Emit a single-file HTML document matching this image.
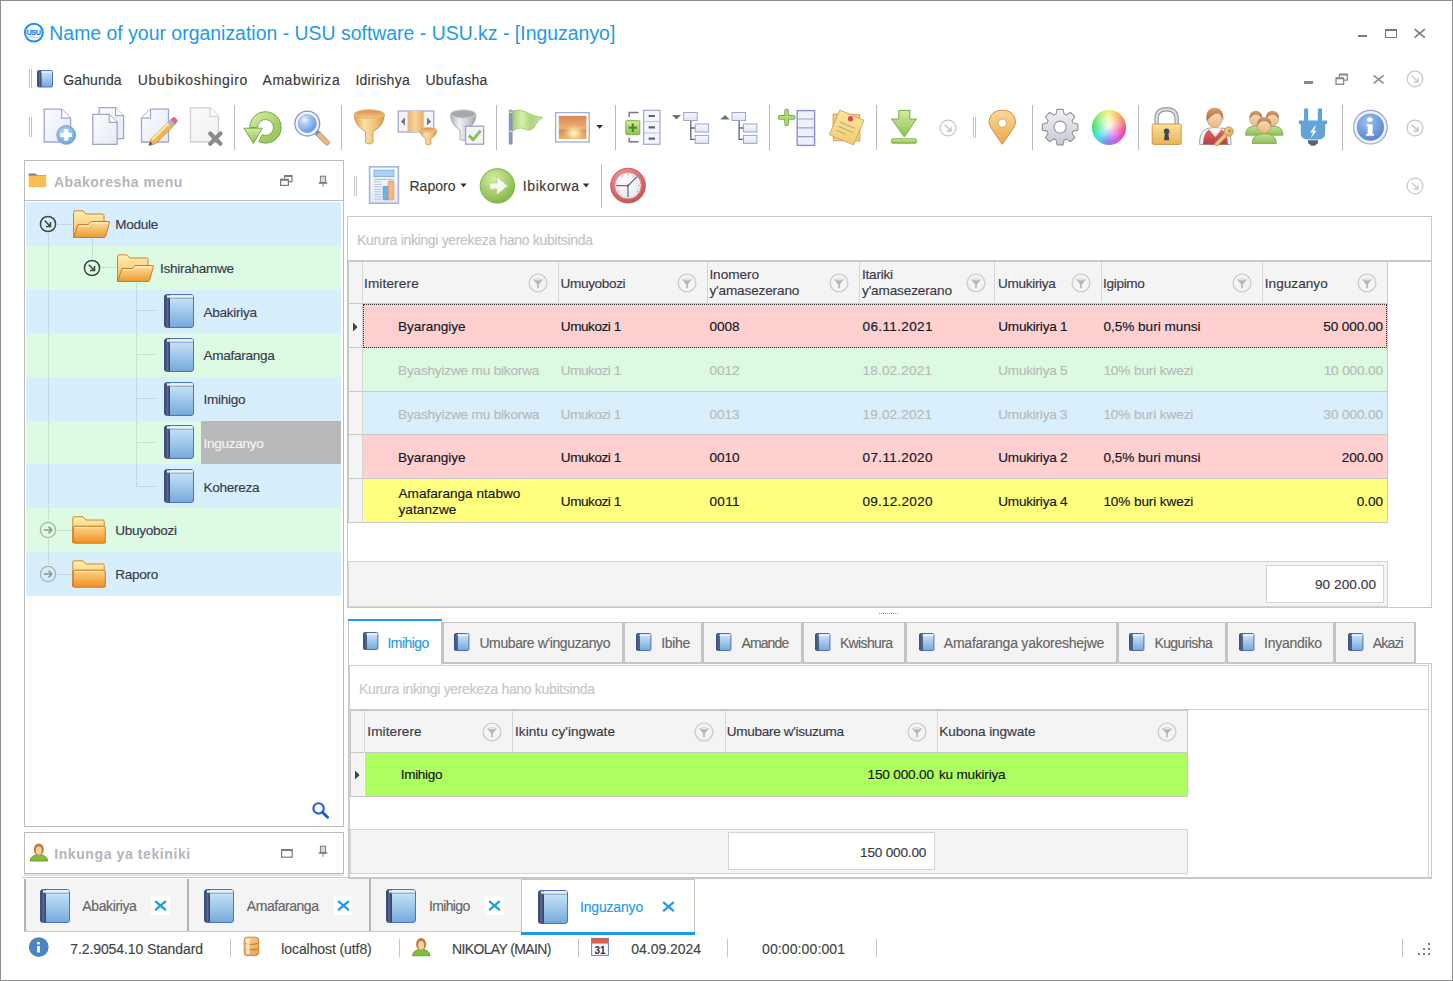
<!DOCTYPE html>
<html><head><meta charset="utf-8"><style>
html,body{margin:0;padding:0;}
body{width:1453px;height:981px;position:relative;overflow:hidden;background:#fff;font-family:"Liberation Sans", sans-serif;}
.a{position:absolute;}
.t{white-space:pre;-webkit-text-stroke:0.15px currentColor;}
svg{overflow:visible;}
</style></head><body>
<svg width="0" height="0" style="position:absolute"><defs>
<linearGradient id="gBookCover" x1="0" y1="0" x2="0" y2="1"><stop offset="0" stop-color="#cfe9f9"/><stop offset="1" stop-color="#74a9dc"/></linearGradient>
<linearGradient id="gBookSpine" x1="0" y1="0" x2="1" y2="0"><stop offset="0" stop-color="#2c3657"/><stop offset="0.5" stop-color="#5d6c95"/><stop offset="1" stop-color="#2f3b60"/></linearGradient>
<linearGradient id="gFoldBack" x1="0" y1="0" x2="0" y2="1"><stop offset="0" stop-color="#ffefb0"/><stop offset="1" stop-color="#f3b758"/></linearGradient>
<linearGradient id="gFoldFront" x1="0" y1="0" x2="0" y2="1"><stop offset="0" stop-color="#fde0a0"/><stop offset="1" stop-color="#ec9a30"/></linearGradient>
<linearGradient id="gFoldFrontC" x1="0" y1="0" x2="0" y2="1"><stop offset="0" stop-color="#fdd48a"/><stop offset="1" stop-color="#f19020"/></linearGradient>
</defs></svg>
<svg width="0" height="0" style="position:absolute"><defs>
<linearGradient id="gPage" x1="0" y1="0" x2="1" y2="1"><stop offset="0" stop-color="#fbfcff"/><stop offset="1" stop-color="#e6eaf4"/></linearGradient>
<linearGradient id="gPageGray" x1="0" y1="0" x2="1" y2="1"><stop offset="0" stop-color="#fcfcfc"/><stop offset="1" stop-color="#efefef"/></linearGradient>
<radialGradient id="gPlus" cx="0.45" cy="0.4" r="0.6"><stop offset="0" stop-color="#c4e2f8"/><stop offset="1" stop-color="#66a2d8"/></radialGradient>
<linearGradient id="gGreen" x1="0" y1="0" x2="0" y2="1"><stop offset="0" stop-color="#d4eca0"/><stop offset="1" stop-color="#8cc052"/></linearGradient>
<linearGradient id="gGreen2" x1="0" y1="0" x2="1" y2="1"><stop offset="0" stop-color="#d8f0a8"/><stop offset="1" stop-color="#88bc50"/></linearGradient>
<radialGradient id="gLens" cx="0.35" cy="0.3" r="0.75"><stop offset="0" stop-color="#eef6ff"/><stop offset="0.35" stop-color="#a8ccf4"/><stop offset="1" stop-color="#5e96dc"/></radialGradient>
<linearGradient id="gGold" x1="0" y1="0" x2="1" y2="0"><stop offset="0" stop-color="#e0a050"/><stop offset="0.35" stop-color="#fde0a8"/><stop offset="0.7" stop-color="#f0c07a"/><stop offset="1" stop-color="#d89848"/></linearGradient>
<linearGradient id="gGoldIn" x1="0" y1="0" x2="0" y2="1"><stop offset="0" stop-color="#d8904a"/><stop offset="1" stop-color="#f4c888"/></linearGradient>
<linearGradient id="gSilver" x1="0" y1="0" x2="1" y2="0"><stop offset="0" stop-color="#a8acb4"/><stop offset="0.35" stop-color="#f0f2f6"/><stop offset="0.7" stop-color="#c8ccd4"/><stop offset="1" stop-color="#9a9ea8"/></linearGradient>
<linearGradient id="gColGold" x1="0" y1="0" x2="1" y2="0"><stop offset="0" stop-color="#eab46c"/><stop offset="0.5" stop-color="#f8d49a"/><stop offset="1" stop-color="#e8ac60"/></linearGradient>
<linearGradient id="gFlag" x1="0" y1="0" x2="1" y2="0"><stop offset="0" stop-color="#a4cc70"/><stop offset="0.3" stop-color="#d8f0b0"/><stop offset="0.6" stop-color="#b0d480"/><stop offset="1" stop-color="#c8e4a0"/></linearGradient>
<linearGradient id="gSun" x1="0" y1="0" x2="0" y2="1"><stop offset="0" stop-color="#d88a58"/><stop offset="0.55" stop-color="#eab070"/><stop offset="0.62" stop-color="#c89060"/><stop offset="1" stop-color="#f0b060"/></linearGradient>
<radialGradient id="gSunGlow" cx="0.55" cy="0.75" r="0.45"><stop offset="0" stop-color="#fffbe0"/><stop offset="0.4" stop-color="#fbe0a0" stop-opacity="0.8"/><stop offset="1" stop-color="#f0b060" stop-opacity="0"/></radialGradient>
<linearGradient id="gCell" x1="0" y1="0" x2="0" y2="1"><stop offset="0" stop-color="#f8faff"/><stop offset="1" stop-color="#dfe5f4"/></linearGradient>
<linearGradient id="gNote" x1="0" y1="0" x2="0" y2="1"><stop offset="0" stop-color="#fbe6a0"/><stop offset="1" stop-color="#f2cc70"/></linearGradient>
<linearGradient id="gPin" x1="0" y1="0" x2="0" y2="1"><stop offset="0" stop-color="#fbd89a"/><stop offset="1" stop-color="#eaa850"/></linearGradient>
<linearGradient id="gGear" x1="0" y1="0" x2="0" y2="1"><stop offset="0" stop-color="#f2f3f6"/><stop offset="1" stop-color="#c4c8d2"/></linearGradient>
<linearGradient id="gLock" x1="0" y1="0" x2="0" y2="1"><stop offset="0" stop-color="#fbe09a"/><stop offset="1" stop-color="#eab454"/></linearGradient>
<linearGradient id="gShackle" x1="0" y1="0" x2="1" y2="0"><stop offset="0" stop-color="#8e939c"/><stop offset="0.5" stop-color="#e6e8ec"/><stop offset="1" stop-color="#8e939c"/></linearGradient>
<linearGradient id="gHair" x1="0" y1="0" x2="0" y2="1"><stop offset="0" stop-color="#d8a070"/><stop offset="1" stop-color="#a86838"/></linearGradient>
<linearGradient id="gFace" x1="0" y1="0" x2="0" y2="1"><stop offset="0" stop-color="#fbe0c0"/><stop offset="1" stop-color="#e8b888"/></linearGradient>
<linearGradient id="gVest" x1="0" y1="0" x2="0" y2="1"><stop offset="0" stop-color="#d86868"/><stop offset="1" stop-color="#b84040"/></linearGradient>
<linearGradient id="gKey" x1="0" y1="0" x2="1" y2="1"><stop offset="0" stop-color="#fbd890"/><stop offset="1" stop-color="#e0a050"/></linearGradient>
<linearGradient id="gBody" x1="0" y1="0" x2="0" y2="1"><stop offset="0" stop-color="#c0e090"/><stop offset="1" stop-color="#90c058"/></linearGradient>
<radialGradient id="gInfo" cx="0.4" cy="0.3" r="0.8"><stop offset="0" stop-color="#9cc0f0"/><stop offset="1" stop-color="#4e80cc"/></radialGradient>
<linearGradient id="gReport" x1="0" y1="0" x2="0" y2="1"><stop offset="0" stop-color="#fafcff"/><stop offset="1" stop-color="#e4eaf6"/></linearGradient>
<radialGradient id="gGo" cx="0.4" cy="0.3" r="0.8"><stop offset="0" stop-color="#d4eea0"/><stop offset="1" stop-color="#78b040"/></radialGradient>
<radialGradient id="gClockRim" cx="0.4" cy="0.3" r="0.8"><stop offset="0" stop-color="#f4a0a0"/><stop offset="1" stop-color="#c84848"/></radialGradient>
<radialGradient id="gClockFace" cx="0.45" cy="0.4" r="0.7"><stop offset="0" stop-color="#ffffff"/><stop offset="1" stop-color="#e0e4ec"/></radialGradient>
</defs></svg>
<div class="a" style="left:0px;top:0px;width:1453px;height:981px;box-sizing:border-box;border:1px solid #8e8e8e;"></div>
<div class="a t" style="left:49.30px;top:23.98px;font-size:19.4px;line-height:19.4px;color:#1e9be6;letter-spacing:0.021px;-webkit-text-stroke:0;">Name of your organization - USU software - USU.kz - [Inguzanyo]</div>
<div class="a t" style="left:63.30px;top:72.95px;font-size:14px;line-height:14px;color:#3a3a3a;letter-spacing:0.115px;">Gahunda</div>
<div class="a t" style="left:137.80px;top:72.95px;font-size:14px;line-height:14px;color:#3a3a3a;letter-spacing:0.657px;">Ububikoshingiro</div>
<div class="a t" style="left:262.50px;top:72.95px;font-size:14px;line-height:14px;color:#3a3a3a;letter-spacing:0.538px;">Amabwiriza</div>
<div class="a t" style="left:355.40px;top:72.95px;font-size:14px;line-height:14px;color:#3a3a3a;letter-spacing:0.270px;">Idirishya</div>
<div class="a t" style="left:425.40px;top:72.95px;font-size:14px;line-height:14px;color:#3a3a3a;letter-spacing:0.295px;">Ubufasha</div>
<div class="a" style="left:24px;top:160px;width:320px;height:667px;box-sizing:border-box;border:1px solid #bcbcbc;"></div>
<div class="a" style="left:25px;top:200px;width:318px;height:1px;background:#bcbcbc;"></div>
<div class="a t" style="left:54.00px;top:174.65px;font-size:14px;line-height:14px;color:#b5b5bb;font-weight:bold;-webkit-text-stroke:0;letter-spacing:0.495px;">Abakoresha menu</div>
<div class="a" style="left:26px;top:202px;width:315px;height:44px;background:#d7effd;"></div>
<div class="a t" style="left:115.30px;top:218.09px;font-size:13.6px;line-height:13.6px;color:#3a3a4e;letter-spacing:-0.3px;">Module</div>
<div class="a" style="left:26px;top:246px;width:315px;height:44px;background:#dcfbe2;"></div>
<div class="a t" style="left:160.00px;top:261.84px;font-size:13.6px;line-height:13.6px;color:#3a3a4e;letter-spacing:-0.3px;">Ishirahamwe</div>
<div class="a" style="left:26px;top:290px;width:315px;height:43px;background:#d7effd;"></div>
<div class="a t" style="left:203.50px;top:305.59px;font-size:13.6px;line-height:13.6px;color:#3a3a4e;letter-spacing:-0.3px;">Abakiriya</div>
<div class="a" style="left:26px;top:333px;width:315px;height:44px;background:#dcfbe2;"></div>
<div class="a t" style="left:203.50px;top:349.34px;font-size:13.6px;line-height:13.6px;color:#3a3a4e;letter-spacing:-0.3px;">Amafaranga</div>
<div class="a" style="left:26px;top:377px;width:315px;height:44px;background:#d7effd;"></div>
<div class="a t" style="left:203.50px;top:393.09px;font-size:13.6px;line-height:13.6px;color:#3a3a4e;letter-spacing:-0.3px;">Imihigo</div>
<div class="a" style="left:26px;top:421px;width:315px;height:43px;background:#dcfbe2;"></div>
<div class="a" style="left:201px;top:421px;width:140px;height:43px;background:#b9b9b9;"></div>
<div class="a t" style="left:203.50px;top:436.84px;font-size:13.6px;line-height:13.6px;color:#f4f4f4;letter-spacing:-0.3px;">Inguzanyo</div>
<div class="a" style="left:26px;top:464px;width:315px;height:44px;background:#d7effd;"></div>
<div class="a t" style="left:203.50px;top:480.59px;font-size:13.6px;line-height:13.6px;color:#3a3a4e;letter-spacing:-0.3px;">Kohereza</div>
<div class="a" style="left:26px;top:508px;width:315px;height:44px;background:#dcfbe2;"></div>
<div class="a t" style="left:115.30px;top:524.34px;font-size:13.6px;line-height:13.6px;color:#3a3a4e;letter-spacing:-0.3px;">Ubuyobozi</div>
<div class="a" style="left:26px;top:552px;width:315px;height:44px;background:#d7effd;"></div>
<div class="a t" style="left:115.30px;top:568.09px;font-size:13.6px;line-height:13.6px;color:#3a3a4e;letter-spacing:-0.3px;">Raporo</div>
<div class="a" style="left:24px;top:832px;width:320px;height:42px;box-sizing:border-box;border:1px solid #bcbcbc;"></div>
<div class="a" style="left:24px;top:874px;width:320px;height:2px;background:#e4e4e4;"></div>
<div class="a t" style="left:54.20px;top:847.05px;font-size:14px;line-height:14px;color:#b5b5bb;font-weight:bold;-webkit-text-stroke:0;letter-spacing:0.596px;">Inkunga ya tekiniki</div>
<div class="a t" style="left:409.40px;top:179.15px;font-size:14px;line-height:14px;color:#3a3a3a;letter-spacing:0.056px;">Raporo</div>
<div class="a t" style="left:522.80px;top:179.15px;font-size:14px;line-height:14px;color:#3a3a3a;letter-spacing:0.580px;">Ibikorwa</div>
<div class="a" style="left:347px;top:216px;width:1085px;height:392px;box-sizing:border-box;border:1px solid #c8c8c8;"></div>
<div class="a t" style="left:357.00px;top:233.15px;font-size:14px;line-height:14px;color:#c2c2c4;letter-spacing:-0.323px;">Kurura inkingi yerekeza hano kubitsinda</div>
<div class="a" style="left:348px;top:260px;width:1083px;height:2px;background:#c8c8c8;"></div>
<div class="a" style="left:348px;top:262px;width:1040px;height:42px;background:#f4f4f4;"></div>
<div class="a" style="left:348px;top:262px;width:1px;height:261px;background:#c8c8c8;"></div>
<div class="a" style="left:1387px;top:262px;width:1px;height:261px;background:#c8c8c8;"></div>
<div class="a" style="left:348px;top:303px;width:1040px;height:1px;background:#c8c8c8;"></div>
<div class="a" style="left:362px;top:262px;width:1px;height:42px;background:#d6d6d6;"></div>
<div class="a" style="left:558px;top:262px;width:1px;height:42px;background:#d6d6d6;"></div>
<div class="a" style="left:707px;top:262px;width:1px;height:42px;background:#d6d6d6;"></div>
<div class="a" style="left:859px;top:262px;width:1px;height:42px;background:#d6d6d6;"></div>
<div class="a" style="left:994px;top:262px;width:1px;height:42px;background:#d6d6d6;"></div>
<div class="a" style="left:1101px;top:262px;width:1px;height:42px;background:#d6d6d6;"></div>
<div class="a" style="left:1262px;top:262px;width:1px;height:42px;background:#d6d6d6;"></div>
<div class="a t" style="left:364.00px;top:276.99px;font-size:13.6px;line-height:13.6px;color:#3a3a46;letter-spacing:0.132px;">Imiterere</div>
<div class="a t" style="left:560.60px;top:276.99px;font-size:13.6px;line-height:13.6px;color:#3a3a46;letter-spacing:-0.375px;">Umuyobozi</div>
<div class="a t" style="left:709.40px;top:268.19px;font-size:13.6px;line-height:13.6px;color:#3a3a46;letter-spacing:-0.046px;">Inomero</div>
<div class="a t" style="left:709.40px;top:284.49px;font-size:13.6px;line-height:13.6px;color:#3a3a46;letter-spacing:-0.147px;">y'amasezerano</div>
<div class="a t" style="left:862.00px;top:268.19px;font-size:13.6px;line-height:13.6px;color:#3a3a46;letter-spacing:-0.237px;">Itariki</div>
<div class="a t" style="left:862.00px;top:284.49px;font-size:13.6px;line-height:13.6px;color:#3a3a46;letter-spacing:-0.147px;">y'amasezerano</div>
<div class="a t" style="left:998.00px;top:276.99px;font-size:13.6px;line-height:13.6px;color:#3a3a46;letter-spacing:-0.328px;">Umukiriya</div>
<div class="a t" style="left:1103.00px;top:276.99px;font-size:13.6px;line-height:13.6px;color:#3a3a46;letter-spacing:-0.318px;">Igipimo</div>
<div class="a t" style="left:1264.80px;top:276.99px;font-size:13.6px;line-height:13.6px;color:#3a3a46;letter-spacing:0.021px;">Inguzanyo</div>
<div class="a" style="left:349px;top:304px;width:13px;height:44px;background:#f4f4f4;"></div>
<div class="a" style="left:363px;top:304px;width:1024px;height:43px;background:#ffd0d0;"></div>
<div class="a" style="left:349px;top:347px;width:1038px;height:1px;background:#c8c8c8;"></div>
<div class="a" style="left:362px;top:304px;width:1px;height:44px;background:#d6d6d6;"></div>
<div class="a t" style="left:398.00px;top:319.89px;font-size:13.6px;line-height:13.6px;color:#15151f;letter-spacing:-0.046px;">Byarangiye</div>
<div class="a t" style="left:560.80px;top:319.89px;font-size:13.6px;line-height:13.6px;color:#15151f;letter-spacing:-0.477px;">Umukozi 1</div>
<div class="a t" style="left:709.50px;top:319.89px;font-size:13.6px;line-height:13.6px;color:#15151f;letter-spacing:-0.083px;">0008</div>
<div class="a t" style="left:862.50px;top:319.89px;font-size:13.6px;line-height:13.6px;color:#15151f;letter-spacing:0.330px;">06.11.2021</div>
<div class="a t" style="left:998.30px;top:319.89px;font-size:13.6px;line-height:13.6px;color:#15151f;letter-spacing:-0.247px;">Umukiriya 1</div>
<div class="a t" style="left:1103.40px;top:319.89px;font-size:13.6px;line-height:13.6px;color:#15151f;letter-spacing:-0.019px;">0,5% buri munsi</div>
<div class="a t" style="left:1323.20px;top:319.89px;font-size:13.6px;line-height:13.6px;color:#15151f;letter-spacing:-0.086px;">50 000.00</div>
<div class="a" style="left:349px;top:348px;width:13px;height:44px;background:#f4f4f4;"></div>
<div class="a" style="left:363px;top:348px;width:1024px;height:43px;background:#dcfae1;"></div>
<div class="a" style="left:349px;top:391px;width:1038px;height:1px;background:#c8c8c8;"></div>
<div class="a" style="left:362px;top:348px;width:1px;height:44px;background:#d6d6d6;"></div>
<div class="a t" style="left:398.00px;top:363.89px;font-size:13.6px;line-height:13.6px;color:#b9b9b9;letter-spacing:-0.183px;">Byashyizwe mu bikorwa</div>
<div class="a t" style="left:560.80px;top:363.89px;font-size:13.6px;line-height:13.6px;color:#b9b9b9;letter-spacing:-0.477px;">Umukozi 1</div>
<div class="a t" style="left:709.50px;top:363.89px;font-size:13.6px;line-height:13.6px;color:#b9b9b9;letter-spacing:-0.083px;">0012</div>
<div class="a t" style="left:862.50px;top:363.89px;font-size:13.6px;line-height:13.6px;color:#b9b9b9;letter-spacing:0.161px;">18.02.2021</div>
<div class="a t" style="left:998.30px;top:363.89px;font-size:13.6px;line-height:13.6px;color:#b9b9b9;letter-spacing:-0.247px;">Umukiriya 5</div>
<div class="a t" style="left:1103.40px;top:363.89px;font-size:13.6px;line-height:13.6px;color:#b9b9b9;letter-spacing:-0.109px;">10% buri kwezi</div>
<div class="a t" style="left:1323.70px;top:363.89px;font-size:13.6px;line-height:13.6px;color:#b9b9b9;letter-spacing:-0.148px;">10 000.00</div>
<div class="a" style="left:349px;top:392px;width:13px;height:43px;background:#f4f4f4;"></div>
<div class="a" style="left:363px;top:392px;width:1024px;height:42px;background:#d8effd;"></div>
<div class="a" style="left:349px;top:434px;width:1038px;height:1px;background:#c8c8c8;"></div>
<div class="a" style="left:362px;top:392px;width:1px;height:43px;background:#d6d6d6;"></div>
<div class="a t" style="left:398.00px;top:407.89px;font-size:13.6px;line-height:13.6px;color:#b9b9b9;letter-spacing:-0.183px;">Byashyizwe mu bikorwa</div>
<div class="a t" style="left:560.80px;top:407.89px;font-size:13.6px;line-height:13.6px;color:#b9b9b9;letter-spacing:-0.477px;">Umukozi 1</div>
<div class="a t" style="left:709.50px;top:407.89px;font-size:13.6px;line-height:13.6px;color:#b9b9b9;letter-spacing:-0.083px;">0013</div>
<div class="a t" style="left:862.50px;top:407.89px;font-size:13.6px;line-height:13.6px;color:#b9b9b9;letter-spacing:0.161px;">19.02.2021</div>
<div class="a t" style="left:998.30px;top:407.89px;font-size:13.6px;line-height:13.6px;color:#b9b9b9;letter-spacing:-0.247px;">Umukiriya 3</div>
<div class="a t" style="left:1103.40px;top:407.89px;font-size:13.6px;line-height:13.6px;color:#b9b9b9;letter-spacing:-0.109px;">10% buri kwezi</div>
<div class="a t" style="left:1323.50px;top:407.89px;font-size:13.6px;line-height:13.6px;color:#b9b9b9;letter-spacing:-0.123px;">30 000.00</div>
<div class="a" style="left:349px;top:435px;width:13px;height:44px;background:#f4f4f4;"></div>
<div class="a" style="left:363px;top:435px;width:1024px;height:43px;background:#ffd0d0;"></div>
<div class="a" style="left:349px;top:478px;width:1038px;height:1px;background:#c8c8c8;"></div>
<div class="a" style="left:362px;top:435px;width:1px;height:44px;background:#d6d6d6;"></div>
<div class="a t" style="left:398.00px;top:450.89px;font-size:13.6px;line-height:13.6px;color:#15151f;letter-spacing:-0.046px;">Byarangiye</div>
<div class="a t" style="left:560.80px;top:450.89px;font-size:13.6px;line-height:13.6px;color:#15151f;letter-spacing:-0.477px;">Umukozi 1</div>
<div class="a t" style="left:709.50px;top:450.89px;font-size:13.6px;line-height:13.6px;color:#15151f;letter-spacing:-0.083px;">0010</div>
<div class="a t" style="left:862.50px;top:450.89px;font-size:13.6px;line-height:13.6px;color:#15151f;letter-spacing:0.330px;">07.11.2020</div>
<div class="a t" style="left:998.30px;top:450.89px;font-size:13.6px;line-height:13.6px;color:#15151f;letter-spacing:-0.247px;">Umukiriya 2</div>
<div class="a t" style="left:1103.40px;top:450.89px;font-size:13.6px;line-height:13.6px;color:#15151f;letter-spacing:-0.019px;">0,5% buri munsi</div>
<div class="a t" style="left:1341.80px;top:450.89px;font-size:13.6px;line-height:13.6px;color:#15151f;letter-spacing:-0.076px;">200.00</div>
<div class="a" style="left:349px;top:479px;width:13px;height:44px;background:#f4f4f4;"></div>
<div class="a" style="left:363px;top:479px;width:1024px;height:43px;background:#ffff80;"></div>
<div class="a" style="left:349px;top:522px;width:1038px;height:1px;background:#c8c8c8;"></div>
<div class="a" style="left:362px;top:479px;width:1px;height:44px;background:#d6d6d6;"></div>
<div class="a t" style="left:398.50px;top:486.99px;font-size:13.6px;line-height:13.6px;color:#15151f;letter-spacing:0.014px;">Amafaranga ntabwo</div>
<div class="a t" style="left:398.50px;top:502.99px;font-size:13.6px;line-height:13.6px;color:#15151f;letter-spacing:0.066px;">yatanzwe</div>
<div class="a t" style="left:560.80px;top:494.89px;font-size:13.6px;line-height:13.6px;color:#15151f;letter-spacing:-0.477px;">Umukozi 1</div>
<div class="a t" style="left:709.50px;top:494.89px;font-size:13.6px;line-height:13.6px;color:#15151f;letter-spacing:0.255px;">0011</div>
<div class="a t" style="left:862.50px;top:494.89px;font-size:13.6px;line-height:13.6px;color:#15151f;letter-spacing:0.217px;">09.12.2020</div>
<div class="a t" style="left:998.30px;top:494.89px;font-size:13.6px;line-height:13.6px;color:#15151f;letter-spacing:-0.247px;">Umukiriya 4</div>
<div class="a t" style="left:1103.40px;top:494.89px;font-size:13.6px;line-height:13.6px;color:#15151f;letter-spacing:-0.109px;">10% buri kwezi</div>
<div class="a t" style="left:1356.80px;top:494.89px;font-size:13.6px;line-height:13.6px;color:#15151f;letter-spacing:-0.090px;">0.00</div>
<div class="a" style="left:363px;top:304px;width:1024px;height:44px;box-sizing:border-box;border:1px dotted #303030;"></div>
<div class="a" style="left:348px;top:561px;width:1040px;height:46px;box-sizing:border-box;border:1px solid #d4d4d4;background:#f4f4f4;"></div>
<div class="a" style="left:1266px;top:565px;width:118px;height:38px;box-sizing:border-box;border:1px solid #d4d4d4;background:#fff;"></div>
<div class="a t" style="left:1315.00px;top:578.19px;font-size:13.6px;line-height:13.6px;color:#3a3a46;letter-spacing:0.064px;">90 200.00</div>
<div class="a" style="left:348px;top:663px;width:1084px;height:216px;box-sizing:border-box;border:1px solid #c8c8c8;"></div>
<div class="a" style="left:349px;top:665px;width:1080px;height:212px;box-sizing:border-box;border:1px solid #d0d0d0;border-bottom:none;"></div>
<div class="a" style="left:348px;top:619px;width:94px;height:46px;background:#fff;box-sizing:border-box;border-left:1px solid #c8c8c8;border-right:1px solid #c8c8c8;"></div>
<div class="a" style="left:348px;top:619px;width:94px;height:2px;background:#1e9be6;"></div>
<div class="a t" style="left:387.50px;top:635.75px;font-size:14px;line-height:14px;color:#1e9be6;letter-spacing:-0.573px;">Imihigo</div>
<div class="a" style="left:442px;top:622px;width:182px;height:41px;box-sizing:border-box;border:1px solid #c4c4c4;border-left-width:2px;border-right-width:2px;background:#f4f4f4;"></div>
<div class="a t" style="left:479.40px;top:636.35px;font-size:14px;line-height:14px;color:#646464;letter-spacing:-0.389px;">Umubare w'inguzanyo</div>
<div class="a" style="left:623px;top:622px;width:80px;height:41px;box-sizing:border-box;border:1px solid #c4c4c4;border-left-width:2px;border-right-width:2px;background:#f4f4f4;"></div>
<div class="a t" style="left:661.30px;top:636.35px;font-size:14px;line-height:14px;color:#646464;letter-spacing:-0.365px;">Ibihe</div>
<div class="a" style="left:702px;top:622px;width:101px;height:41px;box-sizing:border-box;border:1px solid #c4c4c4;border-left-width:2px;border-right-width:2px;background:#f4f4f4;"></div>
<div class="a t" style="left:741.40px;top:636.35px;font-size:14px;line-height:14px;color:#646464;letter-spacing:-0.851px;">Amande</div>
<div class="a" style="left:802px;top:622px;width:104px;height:41px;box-sizing:border-box;border:1px solid #c4c4c4;border-left-width:2px;border-right-width:2px;background:#f4f4f4;"></div>
<div class="a t" style="left:839.90px;top:636.35px;font-size:14px;line-height:14px;color:#646464;letter-spacing:-0.642px;">Kwishura</div>
<div class="a" style="left:905px;top:622px;width:213px;height:41px;box-sizing:border-box;border:1px solid #c4c4c4;border-left-width:2px;border-right-width:2px;background:#f4f4f4;"></div>
<div class="a t" style="left:943.80px;top:636.35px;font-size:14px;line-height:14px;color:#646464;letter-spacing:-0.235px;">Amafaranga yakoreshejwe</div>
<div class="a" style="left:1117px;top:622px;width:110px;height:41px;box-sizing:border-box;border:1px solid #c4c4c4;border-left-width:2px;border-right-width:2px;background:#f4f4f4;"></div>
<div class="a t" style="left:1154.40px;top:636.35px;font-size:14px;line-height:14px;color:#646464;letter-spacing:-0.593px;">Kugurisha</div>
<div class="a" style="left:1226px;top:622px;width:109px;height:41px;box-sizing:border-box;border:1px solid #c4c4c4;border-left-width:2px;border-right-width:2px;background:#f4f4f4;"></div>
<div class="a t" style="left:1264.00px;top:636.35px;font-size:14px;line-height:14px;color:#646464;letter-spacing:-0.242px;">Inyandiko</div>
<div class="a" style="left:1334px;top:622px;width:82px;height:41px;box-sizing:border-box;border:1px solid #c4c4c4;border-left-width:2px;border-right-width:2px;background:#f4f4f4;"></div>
<div class="a t" style="left:1372.70px;top:636.35px;font-size:14px;line-height:14px;color:#646464;letter-spacing:-0.809px;">Akazi</div>
<div class="a t" style="left:359.00px;top:681.55px;font-size:14px;line-height:14px;color:#c6c6c8;letter-spacing:-0.323px;">Kurura inkingi yerekeza hano kubitsinda</div>
<div class="a" style="left:350px;top:709px;width:838px;height:2px;background:#c8c8c8;"></div>
<div class="a" style="left:1188px;top:709px;width:241px;height:1px;background:#cfcfcf;"></div>
<div class="a" style="left:350px;top:711px;width:838px;height:42px;background:#f4f4f4;"></div>
<div class="a" style="left:350px;top:752px;width:838px;height:1px;background:#c8c8c8;"></div>
<div class="a" style="left:350px;top:711px;width:1px;height:86px;background:#c8c8c8;"></div>
<div class="a" style="left:1187px;top:711px;width:1px;height:86px;background:#c8c8c8;"></div>
<div class="a" style="left:364px;top:711px;width:1px;height:42px;background:#d6d6d6;"></div>
<div class="a" style="left:512px;top:711px;width:1px;height:42px;background:#d6d6d6;"></div>
<div class="a" style="left:725px;top:711px;width:1px;height:42px;background:#d6d6d6;"></div>
<div class="a" style="left:937px;top:711px;width:1px;height:42px;background:#d6d6d6;"></div>
<div class="a t" style="left:367.30px;top:725.49px;font-size:13.6px;line-height:13.6px;color:#3a3a46;letter-spacing:0.082px;">Imiterere</div>
<div class="a t" style="left:515.00px;top:725.49px;font-size:13.6px;line-height:13.6px;color:#3a3a46;letter-spacing:0.043px;">Ikintu cy'ingwate</div>
<div class="a t" style="left:726.80px;top:725.49px;font-size:13.6px;line-height:13.6px;color:#3a3a46;letter-spacing:-0.335px;">Umubare w'isuzuma</div>
<div class="a t" style="left:939.20px;top:725.49px;font-size:13.6px;line-height:13.6px;color:#3a3a46;letter-spacing:-0.092px;">Kubona ingwate</div>
<div class="a" style="left:351px;top:753px;width:13px;height:44px;background:#f4f4f4;"></div>
<div class="a" style="left:365px;top:753px;width:822px;height:43px;background:#adff60;"></div>
<div class="a" style="left:351px;top:796px;width:837px;height:1px;background:#c8c8c8;"></div>
<div class="a t" style="left:400.70px;top:768.49px;font-size:13.6px;line-height:13.6px;color:#15151f;letter-spacing:-0.318px;">Imihigo</div>
<div class="a t" style="left:867.60px;top:768.49px;font-size:13.6px;line-height:13.6px;color:#15151f;letter-spacing:-0.183px;">150 000.00</div>
<div class="a t" style="left:939.00px;top:768.49px;font-size:13.6px;line-height:13.6px;color:#15151f;letter-spacing:-0.215px;">ku mukiriya</div>
<div class="a" style="left:350px;top:829px;width:838px;height:45px;box-sizing:border-box;border:1px solid #d4d4d4;background:#f4f4f4;"></div>
<div class="a" style="left:728px;top:832px;width:207px;height:38px;box-sizing:border-box;border:1px solid #d4d4d4;background:#fff;"></div>
<div class="a t" style="left:860.00px;top:846.09px;font-size:13.6px;line-height:13.6px;color:#3a3a46;letter-spacing:-0.183px;">150 000.00</div>
<div class="a" style="left:22px;top:877px;width:1410px;height:1px;background:#c8c8c8;"></div>
<div class="a" style="left:24px;top:879px;width:497px;height:53px;background:#f4f4f4;"></div>
<div class="a t" style="left:82.30px;top:898.65px;font-size:14px;line-height:14px;color:#646464;letter-spacing:-0.387px;">Abakiriya</div>
<div class="a t" style="left:246.80px;top:898.65px;font-size:14px;line-height:14px;color:#646464;letter-spacing:-0.453px;">Amafaranga</div>
<div class="a t" style="left:428.90px;top:898.65px;font-size:14px;line-height:14px;color:#646464;letter-spacing:-0.640px;">Imihigo</div>
<div class="a" style="left:521px;top:879px;width:174px;height:53px;background:#fff;box-sizing:border-box;border:1px solid #c4c4c4;border-bottom:none;"></div>
<div class="a" style="left:521px;top:932px;width:174px;height:3px;background:#1e9be6;"></div>
<div class="a t" style="left:580.00px;top:899.95px;font-size:14px;line-height:14px;color:#1e9be6;letter-spacing:-0.176px;">Inguzanyo</div>
<div class="a" style="left:24px;top:879px;width:2px;height:53px;background:#b4b4b4;"></div>
<div class="a" style="left:187px;top:879px;width:2px;height:53px;background:#b4b4b4;"></div>
<div class="a" style="left:369px;top:879px;width:2px;height:53px;background:#b4b4b4;"></div>
<div class="a" style="left:24px;top:931px;width:497px;height:1px;background:#c8c8c8;"></div>
<div class="a t" style="left:70.30px;top:941.65px;font-size:14px;line-height:14px;color:#444;letter-spacing:-0.104px;">7.2.9054.10 Standard</div>
<div class="a t" style="left:281.30px;top:941.65px;font-size:14px;line-height:14px;color:#444;letter-spacing:-0.089px;">localhost (utf8)</div>
<div class="a t" style="left:452.00px;top:941.65px;font-size:14px;line-height:14px;color:#444;letter-spacing:-0.633px;">NIKOLAY (MAIN)</div>
<div class="a t" style="left:631.30px;top:941.65px;font-size:14px;line-height:14px;color:#444;letter-spacing:-0.042px;">04.09.2024</div>
<div class="a t" style="left:762.00px;top:941.65px;font-size:14px;line-height:14px;color:#444;letter-spacing:0.114px;">00:00:00:001</div>
<div class="a" style="left:230px;top:939px;width:1px;height:18px;background:#c4c4c4;"></div>
<div class="a" style="left:399px;top:939px;width:1px;height:18px;background:#c4c4c4;"></div>
<div class="a" style="left:578px;top:939px;width:1px;height:18px;background:#c4c4c4;"></div>
<div class="a" style="left:727px;top:939px;width:1px;height:18px;background:#c4c4c4;"></div>
<div class="a" style="left:876px;top:939px;width:1px;height:18px;background:#c4c4c4;"></div>
<div class="a" style="left:1402px;top:939px;width:1px;height:18px;background:#c4c4c4;"></div>
<div class="a" style="left:48px;top:233px;width:1px;height:288px;background:repeating-linear-gradient(to bottom,#bcc2c6 0 1px,transparent 1px 2px);"></div>
<div class="a" style="left:48px;top:539px;width:1px;height:26px;background:repeating-linear-gradient(to bottom,#bcc2c6 0 1px,transparent 1px 2px);"></div>
<div class="a" style="left:57px;top:224px;width:15px;height:1px;background:repeating-linear-gradient(to right,#bcc2c6 0 1px,transparent 1px 2px);"></div>
<div class="a" style="left:92px;top:239px;width:1px;height:20px;background:repeating-linear-gradient(to bottom,#bcc2c6 0 1px,transparent 1px 2px);"></div>
<div class="a" style="left:101px;top:267px;width:15px;height:1px;background:repeating-linear-gradient(to right,#bcc2c6 0 1px,transparent 1px 2px);"></div>
<div class="a" style="left:136px;top:283px;width:1px;height:204px;background:repeating-linear-gradient(to bottom,#bcc2c6 0 1px,transparent 1px 2px);"></div>
<div class="a" style="left:137px;top:310px;width:20px;height:1px;background:repeating-linear-gradient(to right,#bcc2c6 0 1px,transparent 1px 2px);"></div>
<div class="a" style="left:137px;top:354px;width:20px;height:1px;background:repeating-linear-gradient(to right,#bcc2c6 0 1px,transparent 1px 2px);"></div>
<div class="a" style="left:137px;top:398px;width:20px;height:1px;background:repeating-linear-gradient(to right,#bcc2c6 0 1px,transparent 1px 2px);"></div>
<div class="a" style="left:137px;top:442px;width:20px;height:1px;background:repeating-linear-gradient(to right,#bcc2c6 0 1px,transparent 1px 2px);"></div>
<div class="a" style="left:137px;top:486px;width:20px;height:1px;background:repeating-linear-gradient(to right,#bcc2c6 0 1px,transparent 1px 2px);"></div>
<div class="a" style="left:57px;top:530px;width:15px;height:1px;background:repeating-linear-gradient(to right,#bcc2c6 0 1px,transparent 1px 2px);"></div>
<div class="a" style="left:57px;top:574px;width:15px;height:1px;background:repeating-linear-gradient(to right,#bcc2c6 0 1px,transparent 1px 2px);"></div>
<svg class="a" style="left:39px;top:215px" width="18" height="18" viewBox="0 0 18 18"><circle cx="9" cy="9" r="7.6" fill="none" stroke="#3f4646" stroke-width="1.5"/><path d="M5.8 5.8 L11.2 11.2 M11.5 7 V11.5 H7" fill="none" stroke="#3f4646" stroke-width="1.6"/></svg>
<svg class="a" style="left:83px;top:258.5px" width="18" height="18" viewBox="0 0 18 18"><circle cx="9" cy="9" r="7.6" fill="none" stroke="#3f4646" stroke-width="1.5"/><path d="M5.8 5.8 L11.2 11.2 M11.5 7 V11.5 H7" fill="none" stroke="#3f4646" stroke-width="1.6"/></svg>
<svg class="a" style="left:39px;top:521px" width="18" height="18" viewBox="0 0 18 18"><circle cx="9" cy="9" r="7.6" fill="none" stroke="#a9b3ad" stroke-width="1.4"/><path d="M4.8 9 H12.6 M9.5 5.6 L12.9 9 L9.5 12.4" fill="none" stroke="#8c9690" stroke-width="1.5"/></svg>
<svg class="a" style="left:39px;top:565px" width="18" height="18" viewBox="0 0 18 18"><circle cx="9" cy="9" r="7.6" fill="none" stroke="#a9b3ad" stroke-width="1.4"/><path d="M4.8 9 H12.6 M9.5 5.6 L12.9 9 L9.5 12.4" fill="none" stroke="#8c9690" stroke-width="1.5"/></svg>
<svg class="a" style="left:72px;top:210px" width="38" height="28" viewBox="0 0 38 28"><path d="M1.5 27.5 V2.5 Q1.5 0.8 3.2 0.8 H11 L14 4 H30.5 Q32 4 32 5.5 V27.5 Z" fill="url(#gFoldBack)" stroke="#cd8233" stroke-width="1"/><path d="M1.5 27.5 L6 14.5 H16.5 L19 11.5 H36.8 Q37.8 11.5 37.5 12.5 L33.5 26.5 Q33.2 27.5 32.2 27.5 Z" fill="url(#gFoldFront)" stroke="#c77b2c" stroke-width="1"/><path d="M7 15.8 H17 L19.5 12.8 H35.5" stroke="#fff3d0" stroke-width="1" fill="none"/></svg>
<svg class="a" style="left:116px;top:254px" width="38" height="28" viewBox="0 0 38 28"><path d="M1.5 27.5 V2.5 Q1.5 0.8 3.2 0.8 H11 L14 4 H30.5 Q32 4 32 5.5 V27.5 Z" fill="url(#gFoldBack)" stroke="#cd8233" stroke-width="1"/><path d="M1.5 27.5 L6 14.5 H16.5 L19 11.5 H36.8 Q37.8 11.5 37.5 12.5 L33.5 26.5 Q33.2 27.5 32.2 27.5 Z" fill="url(#gFoldFront)" stroke="#c77b2c" stroke-width="1"/><path d="M7 15.8 H17 L19.5 12.8 H35.5" stroke="#fff3d0" stroke-width="1" fill="none"/></svg>
<svg class="a" style="left:164px;top:294px" width="30" height="34" viewBox="0 0 30 34"><rect x="0.5" y="0.5" width="29" height="33" rx="2.5" fill="url(#gBookCover)" stroke="#4f74b3"/><path d="M2.5 0.5 H6 V33.5 H2.5 A2 2 0 0 1 0.5 31.5 V2.5 A2 2 0 0 1 2.5 0.5Z" fill="url(#gBookSpine)"/><rect x="3" y="1.4" width="26" height="2.2" fill="#f3f0f5"/><rect x="5.5" y="3.6" width="23.5" height="1.4" fill="#93b6d8"/></svg>
<svg class="a" style="left:164px;top:338px" width="30" height="34" viewBox="0 0 30 34"><rect x="0.5" y="0.5" width="29" height="33" rx="2.5" fill="url(#gBookCover)" stroke="#4f74b3"/><path d="M2.5 0.5 H6 V33.5 H2.5 A2 2 0 0 1 0.5 31.5 V2.5 A2 2 0 0 1 2.5 0.5Z" fill="url(#gBookSpine)"/><rect x="3" y="1.4" width="26" height="2.2" fill="#f3f0f5"/><rect x="5.5" y="3.6" width="23.5" height="1.4" fill="#93b6d8"/></svg>
<svg class="a" style="left:164px;top:382px" width="30" height="34" viewBox="0 0 30 34"><rect x="0.5" y="0.5" width="29" height="33" rx="2.5" fill="url(#gBookCover)" stroke="#4f74b3"/><path d="M2.5 0.5 H6 V33.5 H2.5 A2 2 0 0 1 0.5 31.5 V2.5 A2 2 0 0 1 2.5 0.5Z" fill="url(#gBookSpine)"/><rect x="3" y="1.4" width="26" height="2.2" fill="#f3f0f5"/><rect x="5.5" y="3.6" width="23.5" height="1.4" fill="#93b6d8"/></svg>
<svg class="a" style="left:164px;top:425px" width="30" height="34" viewBox="0 0 30 34"><rect x="0.5" y="0.5" width="29" height="33" rx="2.5" fill="url(#gBookCover)" stroke="#4f74b3"/><path d="M2.5 0.5 H6 V33.5 H2.5 A2 2 0 0 1 0.5 31.5 V2.5 A2 2 0 0 1 2.5 0.5Z" fill="url(#gBookSpine)"/><rect x="3" y="1.4" width="26" height="2.2" fill="#f3f0f5"/><rect x="5.5" y="3.6" width="23.5" height="1.4" fill="#93b6d8"/></svg>
<svg class="a" style="left:164px;top:469px" width="30" height="34" viewBox="0 0 30 34"><rect x="0.5" y="0.5" width="29" height="33" rx="2.5" fill="url(#gBookCover)" stroke="#4f74b3"/><path d="M2.5 0.5 H6 V33.5 H2.5 A2 2 0 0 1 0.5 31.5 V2.5 A2 2 0 0 1 2.5 0.5Z" fill="url(#gBookSpine)"/><rect x="3" y="1.4" width="26" height="2.2" fill="#f3f0f5"/><rect x="5.5" y="3.6" width="23.5" height="1.4" fill="#93b6d8"/></svg>
<svg class="a" style="left:72px;top:516px" width="34" height="28" viewBox="0 0 34 28"><path d="M0.8 27 V2 Q0.8 0.8 2 0.8 H11 L14 4 H31 Q32.2 4 32.2 5.2 V11 H0.8 Z" fill="url(#gFoldBack)" stroke="#d08535" stroke-width="1"/><rect x="1.3" y="10.2" width="32" height="17" rx="1" fill="url(#gFoldFrontC)" stroke="#d07a25" stroke-width="1"/><path d="M2.5 11.6 H32" stroke="#ffe9bf" stroke-width="1"/></svg>
<svg class="a" style="left:72px;top:560px" width="34" height="28" viewBox="0 0 34 28"><path d="M0.8 27 V2 Q0.8 0.8 2 0.8 H11 L14 4 H31 Q32.2 4 32.2 5.2 V11 H0.8 Z" fill="url(#gFoldBack)" stroke="#d08535" stroke-width="1"/><rect x="1.3" y="10.2" width="32" height="17" rx="1" fill="url(#gFoldFrontC)" stroke="#d07a25" stroke-width="1"/><path d="M2.5 11.6 H32" stroke="#ffe9bf" stroke-width="1"/></svg>
<div class="a" style="left:29px;top:117px;width:1px;height:20px;background:#c4c4c4;"></div>
<div class="a" style="left:31px;top:117px;width:1px;height:20px;background:#c4c4c4;"></div>
<svg class="a" style="left:40px;top:105px" width="40" height="43" viewBox="40 105 40 43"><path d="M44.2 109.2 H61.599999999999994 L70.6 118.2 V142 H44.2 Z" fill="url(#gPage)" stroke="#9ea6cc" stroke-width="1.3" stroke-linejoin="round"/><path d="M61.599999999999994 109.2 V118.2 H70.6" fill="#fff" stroke="#9ea6cc" stroke-width="1.2" stroke-linejoin="round"/><circle cx="66.2" cy="134.9" r="9.4" fill="url(#gPlus)" stroke="#7aa8d8" stroke-width="1"/><path d="M66.2 129 V140.8 M60.3 134.9 H72.1" stroke="#fff" stroke-width="4"/></svg>
<svg class="a" style="left:89px;top:104px" width="39" height="44" viewBox="89 104 39 44"><path d="M99.2 107.6 H115.6 L123.6 115.6 V138.6 H99.2 Z" fill="url(#gPage)" stroke="#9ea6cc" stroke-width="1.3" stroke-linejoin="round"/><path d="M115.6 107.6 V115.6 H123.6" fill="#fff" stroke="#9ea6cc" stroke-width="1.2" stroke-linejoin="round"/><path d="M92.8 114.4 H109.2 L117.2 122.4 V144.3 H92.8 Z" fill="url(#gPage)" stroke="#9ea6cc" stroke-width="1.3" stroke-linejoin="round"/><path d="M109.2 114.4 V122.4 H117.2" fill="#fff" stroke="#9ea6cc" stroke-width="1.2" stroke-linejoin="round"/></svg>
<svg class="a" style="left:138px;top:104px" width="42" height="45" viewBox="138 104 42 45"><path d="M150.5 109.2 H168.5 V142 H141.5 V118.2 Z" fill="url(#gPage)" stroke="#9ea6cc" stroke-width="1.3" stroke-linejoin="round"/><path d="M150.5 109.2 V118.2 H141.5" fill="#fff" stroke="#9ea6cc" stroke-width="1.2" stroke-linejoin="round"/><path d="M148.8 145.6 L151.2 139 L170.6 119.6 L175.2 124.2 L155.8 143.6 Z" fill="#f2b64e" stroke="#c88a38" stroke-width="0.8"/><path d="M151.2 139 L170.6 119.6 L172.3 121.3 L152.9 140.7Z" fill="#fde6a0"/><path d="M148.8 145.6 L150.2 141.6 L152.8 144.2 Z" fill="#505868"/><path d="M167.8 122.4 L170.6 119.6 L175.2 124.2 L172.4 127 Z" fill="#a8b4cc"/><path d="M170.6 119.6 L172.6 117.6 Q174 116.4 175.4 117.8 L177 119.4 Q178.2 120.8 177.2 122 L175.2 124.2 Z" fill="#e46a78"/></svg>
<svg class="a" style="left:186px;top:104px" width="40" height="45" viewBox="186 104 40 45"><path d="M190.5 107.8 H210.0 L218.5 116.3 V142 H190.5 Z" fill="url(#gPageGray)" stroke="#d0d0d0" stroke-width="1.3" stroke-linejoin="round"/><path d="M210.0 107.8 V116.3 H218.5" fill="#fff" stroke="#d0d0d0" stroke-width="1.2" stroke-linejoin="round"/><path d="M210.2 133.6 L220.4 143.8 M220.4 133.6 L210.2 143.8" stroke="#8a8a8a" stroke-width="4.2" stroke-linecap="round"/></svg>
<div class="a" style="left:234px;top:105px;width:1px;height:45px;background:#b9b9b9;"></div>
<svg class="a" style="left:242px;top:108px" width="42" height="39" viewBox="242 108 42 39"><path d="M249.8 127.5 A15.7 15.7 0 1 1 258.9 141.7 L262.1 134.75 A8 8 0 1 0 257.5 127.5 Z" fill="url(#gGreen2)" stroke="#7aa848" stroke-width="1"/><path d="M243.9 128.2 H262.2 L253.4 143.5 Z" fill="url(#gGreen)" stroke="#7aa848" stroke-width="1" stroke-linejoin="round"/></svg>
<svg class="a" style="left:292px;top:108px" width="39" height="39" viewBox="292 108 39 39"><path d="M316 131.5 L327 142.6" stroke="#7e88b8" stroke-width="5.4" stroke-linecap="round"/><path d="M319.5 135 L327 142.6" stroke="#ecb872" stroke-width="4.4" stroke-linecap="round"/><circle cx="307.3" cy="123.6" r="12.4" fill="#f4f6ff" stroke="#8a92c4" stroke-width="1.3"/><circle cx="307.3" cy="123.6" r="9.2" fill="url(#gLens)" stroke="#9aaee0" stroke-width="0.8"/></svg>
<div class="a" style="left:341px;top:105px;width:1px;height:45px;background:#b9b9b9;"></div>
<svg class="a" style="left:351px;top:107px" width="36" height="40" viewBox="351 107 36 40"><path d="M354.2 114.2 Q354.6 125 363.4 130.2 L365.6 131.5 V142.6 Q369.3 145.4 373 142.6 V131.5 L375.2 130.2 Q384 125 384.4 114.2 Z" fill="url(#gGold)" stroke="#c88c48" stroke-width="0.8"/><ellipse cx="369.3" cy="114.2" rx="15" ry="4.4" fill="url(#gGoldIn)" stroke="#e8b878" stroke-width="1"/></svg>
<svg class="a" style="left:395px;top:108px" width="45" height="40" viewBox="395 108 45 40"><rect x="398.2" y="111" width="35.6" height="21" fill="#f2f4fa" stroke="#9aa4d2" stroke-width="1.2"/><rect x="407.6" y="111" width="16" height="21" fill="url(#gColGold)"/><path d="M405 117.5 L400.8 121.5 L405 125.5Z M427 117.5 L431.2 121.5 L427 125.5Z" fill="#707888"/><path d="M420 130 Q420.4 136 425.8 138.6 V144 Q428.4 146 431 144 V138.6 Q436.4 136 436.8 130 Z" fill="url(#gGold)" stroke="#c88c48" stroke-width="0.7"/><ellipse cx="428.4" cy="130" rx="8.4" ry="2.6" fill="url(#gGoldIn)" stroke="#eac080" stroke-width="0.8"/></svg>
<svg class="a" style="left:448px;top:107px" width="38" height="40" viewBox="448 107 38 40"><path d="M450.4 114 Q450.8 124 458.4 129 L460 130.2 V139.6 Q463.2 141.4 466.4 139.6 V130.2 L468 129 Q475.6 124 476 114 Z" fill="url(#gSilver)" stroke="#9a9ea8" stroke-width="0.8"/><ellipse cx="463.2" cy="114" rx="12.8" ry="4.2" fill="#a4a8b0" stroke="#d8dade" stroke-width="1"/><rect x="465.6" y="126.2" width="18" height="18" fill="#f4f6fc" stroke="#98a2d2" stroke-width="1.3"/><path d="M468.8 135.4 L473.2 139.6 L480.6 130.6" fill="none" stroke="#8cc050" stroke-width="3"/></svg>
<div class="a" style="left:496px;top:105px;width:1px;height:45px;background:#b9b9b9;"></div>
<svg class="a" style="left:506px;top:107px" width="40" height="40" viewBox="506 107 40 40"><path d="M512.6 111 Q520 108.6 526 112 Q533 116.6 542.8 117.4 Q537 121 533.6 128 Q530 131.8 524 128.6 Q518 126.6 512.6 131.4 Z" fill="url(#gFlag)" stroke="#98c068" stroke-width="0.8"/><rect x="508.8" y="109.8" width="3.8" height="34.8" rx="1.2" fill="#8894bc"/><rect x="508.8" y="111.5" width="3.8" height="1.6" fill="#c8e090"/><rect x="508.8" y="130.5" width="3.8" height="1.6" fill="#c8e090"/></svg>
<svg class="a" style="left:553px;top:110px" width="53" height="35" viewBox="553 110 53 35"><rect x="555.6" y="112.6" width="33.6" height="29.4" fill="#fff" stroke="#a2acd8" stroke-width="1.3"/><rect x="558.8" y="115.9" width="27.6" height="23.1" fill="url(#gSun)"/><rect x="558.8" y="115.9" width="27.6" height="23.1" fill="url(#gSunGlow)"/><path d="M596.2 125 H603 L599.6 128.7Z" fill="#303030"/></svg>
<div class="a" style="left:615px;top:105px;width:1px;height:45px;background:#b9b9b9;"></div>
<svg class="a" style="left:623px;top:108px" width="40" height="39" viewBox="623 108 40 39"><path d="M638.5 112.5 H629.2 V117 M638.5 141.8 H629.2 V137.4" fill="none" stroke="#6e7688" stroke-width="1.4"/><rect x="643.6" y="110.3" width="16.4" height="34" fill="#f2f5fc" stroke="#a0a8d0" stroke-width="1.2"/><path d="M643.6 121.6 H660 M643.6 133 H660" stroke="#b8c0dc" stroke-width="1"/><path d="M648.6 116 H655 M648.6 127.4 H655 M648.6 138.6 H655" stroke="#5e6676" stroke-width="2.2"/><rect x="625.8" y="120.7" width="14" height="14" rx="1" fill="url(#gGreen)" stroke="#80b048" stroke-width="1"/><path d="M632.8 123.6 V131.8 M628.7 127.7 H636.9" stroke="#4a8a28" stroke-width="2.2"/></svg>
<svg class="a" style="left:671px;top:110px" width="41" height="36" viewBox="671 110 41 36"><path d="M672 115 H681 L676.5 119.5 Z" fill="#6a7080"/><path d="M690.8 120.5 V139.4 H695.8 M690.8 128 H695.8" fill="none" stroke="#5e6474" stroke-width="1.3"/><rect x="683.8" y="112.5" width="13.4" height="8" fill="url(#gCell)" stroke="#9ca6d0" stroke-width="1"/><rect x="695.1999999999999" y="124" width="13.4" height="8" fill="url(#gCell)" stroke="#9ca6d0" stroke-width="1"/><rect x="695.1999999999999" y="135.4" width="13.4" height="8" fill="url(#gCell)" stroke="#9ca6d0" stroke-width="1"/></svg>
<svg class="a" style="left:719px;top:110px" width="41" height="36" viewBox="719 110 41 36"><path d="M720.3 119.5 H729.8 L725.05 115 Z" fill="#6a7080"/><path d="M739.0999999999999 120.5 V139.4 H744.0999999999999 M739.0999999999999 128 H744.0999999999999" fill="none" stroke="#5e6474" stroke-width="1.3"/><rect x="732.0999999999999" y="112.5" width="13.4" height="8" fill="url(#gCell)" stroke="#9ca6d0" stroke-width="1"/><rect x="743.4999999999999" y="124" width="13.4" height="8" fill="url(#gCell)" stroke="#9ca6d0" stroke-width="1"/><rect x="743.4999999999999" y="135.4" width="13.4" height="8" fill="url(#gCell)" stroke="#9ca6d0" stroke-width="1"/></svg>
<div class="a" style="left:769px;top:105px;width:1px;height:45px;background:#b9b9b9;"></div>
<svg class="a" style="left:777px;top:108px" width="41" height="40" viewBox="777 108 41 40"><path d="M786.6 111 V124 M780 117.4 H793.2" stroke="#7aa848" stroke-width="4.6" stroke-linecap="round"/><path d="M786.6 111 V124 M780 117.4 H793.2" stroke="#b4da7c" stroke-width="2.6" stroke-linecap="round"/><rect x="797.2" y="110.6" width="17.4" height="34.8" fill="#eef1fa" stroke="#8890c8" stroke-width="1.4"/><path d="M797.2 119 H814.6 M797.2 127.9 H814.6 M797.2 136.7 H814.6" stroke="#98a0d0" stroke-width="1.2"/></svg>
<svg class="a" style="left:826px;top:107px" width="42" height="41" viewBox="826 107 42 41"><path d="M833 114 L859.6 114.4 L860 141 L833.4 140.6 Z" fill="#f4cc80" stroke="#d09a58" stroke-width="0.9"/><path d="M839.7 110 L864 120.3 L853.5 144.9 L829.3 134.7 Z" fill="url(#gNote)" stroke="#d4a058" stroke-width="0.9"/><path d="M840 122 L855 128.4 M838.2 126.2 L853.2 132.6 M836.6 130.4 L846 134.4" stroke="#b8a070" stroke-width="1"/><circle cx="850.5" cy="118.7" r="2.6" fill="#e04850"/></svg>
<div class="a" style="left:876px;top:105px;width:1px;height:45px;background:#b9b9b9;"></div>
<svg class="a" style="left:888px;top:108px" width="32" height="39" viewBox="888 108 32 39"><path d="M898.8 110.4 H909.8 V119 H916.4 L904.3 137 L891.6 119 H898.8 Z" fill="url(#gGreen)" stroke="#7aa848" stroke-width="1" stroke-linejoin="round"/><rect x="891.6" y="138.8" width="24.8" height="4.4" rx="0.8" fill="url(#gGreen)" stroke="#7aa848" stroke-width="0.9"/></svg>
<svg class="a" style="left:938.4px;top:118px" width="20.0" height="20" viewBox="938.4 118 20.0 20"><circle cx="948.4" cy="128" r="7.9" fill="none" stroke="#c4c4c4" stroke-width="1.2"/><path d="M945.1999999999999 124.8 L951.1999999999999 130.8 M951.4 126.8 V131 H947.1999999999999" fill="none" stroke="#c4c4c4" stroke-width="1.3"/></svg>
<div class="a" style="left:973px;top:117px;width:1px;height:21px;background:#c4c4c4;"></div>
<div class="a" style="left:975px;top:117px;width:1px;height:21px;background:#c4c4c4;"></div>
<svg class="a" style="left:986px;top:107px" width="36" height="41" viewBox="986 107 36 41"><path d="M1002.3 144.3 Q995 134 990.8 127.5 Q988.6 123.6 989.2 120.4 Q991 110.2 1002.3 110.2 Q1013.6 110.2 1015.4 120.4 Q1016 123.6 1013.8 127.5 Q1009.6 134 1002.3 144.3 Z" fill="url(#gPin)" stroke="#d09048" stroke-width="1"/><circle cx="1002.3" cy="123.1" r="4.2" fill="#fff" stroke="#d8a868" stroke-width="1"/></svg>
<div class="a" style="left:1032px;top:105px;width:1px;height:45px;background:#b9b9b9;"></div>
<svg class="a" style="left:1040px;top:107px" width="41" height="41" viewBox="1040 107 41 41"><path d="M1056.08 114.11 L1057.05 109.36 L1063.15 109.36 L1064.12 114.11 L1066.45 115.07 L1070.49 112.40 L1074.80 116.71 L1072.13 120.75 L1073.09 123.08 L1077.84 124.05 L1077.84 130.15 L1073.09 131.12 L1072.13 133.45 L1074.80 137.49 L1070.49 141.80 L1066.45 139.13 L1064.12 140.09 L1063.15 144.84 L1057.05 144.84 L1056.08 140.09 L1053.75 139.13 L1049.71 141.80 L1045.40 137.49 L1048.07 133.45 L1047.11 131.12 L1042.36 130.15 L1042.36 124.05 L1047.11 123.08 L1048.07 120.75 L1045.40 116.71 L1049.71 112.40 L1053.75 115.07 Z" fill="url(#gGear)" stroke="#8e939c" stroke-width="1.1" stroke-linejoin="round"/><circle cx="1060.1" cy="127.1" r="6" fill="#fff" stroke="#9a9ea8" stroke-width="1.2"/></svg>
<div class="a" style="left:1091.6px;top:110px;width:34.8px;height:34.8px;border-radius:50%;background:radial-gradient(circle at 50% 45%,rgba(255,255,255,0.95) 0,rgba(255,255,255,0.5) 30%,rgba(255,255,255,0) 62%),conic-gradient(from 0deg,#f8f070,#f8a050 45deg,#f04890 100deg,#e050e0 140deg,#9080f0 185deg,#40e0f0 225deg,#40e070 275deg,#b0f070 330deg,#f8f070);"></div>
<div class="a" style="left:1138px;top:105px;width:1px;height:45px;background:#b9b9b9;"></div>
<svg class="a" style="left:1149px;top:106px" width="35" height="41" viewBox="1149 106 35 41"><path d="M1156.6 124 V118.6 Q1156.6 109.2 1166.6 109.2 Q1176.6 109.2 1176.6 118.6 V124" fill="none" stroke="#979ca4" stroke-width="4.4"/><path d="M1156.6 124 V118.6 Q1156.6 109.2 1166.6 109.2 Q1176.6 109.2 1176.6 118.6 V124" fill="none" stroke="#dcdfe4" stroke-width="2"/><rect x="1152.2" y="124" width="29" height="20.4" rx="1.5" fill="url(#gLock)" stroke="#d09848" stroke-width="1"/><path d="M1166.6 128.6 Q1169.4 128.6 1169.4 131.4 Q1169.4 133 1168.4 133.8 L1169.2 140.2 H1164 L1164.8 133.8 Q1163.8 133 1163.8 131.4 Q1163.8 128.6 1166.6 128.6Z" fill="#404858"/></svg>
<svg class="a" style="left:1196px;top:105px" width="40" height="42" viewBox="1196 105 40 42"><path d="M1199.6 144.4 Q1199 131 1208 128.2 H1224 Q1231.6 131 1231 144.4 Z" fill="#f4f4f4" stroke="#a0a0a0" stroke-width="1"/><path d="M1203 144.4 Q1203.4 133 1209 129.6 L1215.2 137 L1221.6 129.6 Q1227.6 133 1228 144.4 Z" fill="url(#gVest)"/><path d="M1209.6 128 L1215.2 134.6 L1220.8 128 Z" fill="#fff" stroke="#c8c8c8" stroke-width="0.6"/><ellipse cx="1214.6" cy="119" rx="7.2" ry="8.6" fill="url(#gFace)" stroke="#c89060" stroke-width="0.8"/><path d="M1206.6 121 Q1205 108 1214.6 107.8 Q1224.4 108 1223.2 121 Q1222 113.8 1217 113.4 Q1211 115 1206.6 121Z" fill="url(#gHair)"/><path d="M1216.6 144 L1227 133.6" stroke="#d09848" stroke-width="4.2" stroke-linecap="round"/><path d="M1216.6 144 L1227 133.6" stroke="#f8d088" stroke-width="2.4" stroke-linecap="round"/><circle cx="1228.7" cy="131.6" r="4.6" fill="url(#gKey)" stroke="#c89048" stroke-width="1"/><circle cx="1229.4" cy="130.8" r="1.2" fill="#b08858"/></svg>
<svg class="a" style="left:1243px;top:106px" width="43" height="40" viewBox="1243 106 43 40"><path d="M1245.6 135.2 Q1245.6 126 1255.3 126 Q1265 126 1265 135.2 Z" fill="url(#gBody)" stroke="#80a850" stroke-width="0.9"/><ellipse cx="1255.8" cy="118.6" rx="6.2" ry="7.4" fill="url(#gFace)" stroke="#c09068" stroke-width="0.7"/><path d="M1249.6 118.6 Q1249.2 111.0 1255.8 111.0 Q1262.3999999999999 111.0 1262.0 118.6 Q1258.8 114.6 1255.8 114.6 Q1252.8 114.6 1249.6 118.6Z" fill="url(#gHair)"/><path d="M1263 135.2 Q1263 126 1273.0 126 Q1283 126 1283 135.2 Z" fill="url(#gBody)" stroke="#80a850" stroke-width="0.9"/><ellipse cx="1272.4" cy="118.6" rx="6.2" ry="7.4" fill="url(#gFace)" stroke="#c09068" stroke-width="0.7"/><path d="M1266.2 118.6 Q1265.8000000000002 111.0 1272.4 111.0 Q1279.0 111.0 1278.6000000000001 118.6 Q1275.4 114.6 1272.4 114.6 Q1269.4 114.6 1266.2 118.6Z" fill="url(#gHair)"/><path d="M1252.2 143.4 Q1252.2 134 1264.2 133.6 Q1276.4 134 1276.4 143.4 Z" fill="url(#gBody)" stroke="#80a850" stroke-width="0.9"/><ellipse cx="1264.2" cy="125.4" rx="6.8" ry="8" fill="url(#gFace)" stroke="#c09068" stroke-width="0.7"/><path d="M1257.4 125.4 Q1256.8 117.2 1264.2 117.2 Q1271.6 117.2 1271 125.4 Q1268 121 1264.2 121 Q1260.4 121 1257.4 125.4Z" fill="url(#gHair)"/></svg>
<svg class="a" style="left:1296px;top:106px" width="34" height="42" viewBox="1296 106 34 42"><rect x="1304" y="108.2" width="4.2" height="13" rx="1.5" fill="#62a3d8"/><rect x="1317.8" y="108.2" width="4.2" height="13" rx="1.5" fill="#62a3d8"/><path d="M1298.8 120.4 H1327.2 V123.8 L1325.2 124.4 V133 Q1325.2 139.4 1318.8 139.4 H1307.2 Q1300.8 139.4 1300.8 133 V124.4 L1298.8 123.8 Z" fill="#62a3d8"/><path d="M1315.2 125.6 L1310.2 132.4 H1313 L1310.8 138.2 L1316.6 130.8 H1313.8 L1316 125.6 Z" fill="#fff"/><path d="M1308 140.2 H1318 V143 L1314.6 145.8 H1311.4 L1308 143 Z" fill="#5a6270"/></svg>
<div class="a" style="left:1342px;top:105px;width:1px;height:45px;background:#b9b9b9;"></div>
<svg class="a" style="left:1351px;top:108px" width="39" height="39" viewBox="1351 108 39 39"><circle cx="1370.4" cy="127.2" r="16.8" fill="#f0f2fa" stroke="#9ca4cc" stroke-width="1.2"/><circle cx="1370.4" cy="127.2" r="13.6" fill="url(#gInfo)"/><ellipse cx="1369.8" cy="119.6" rx="2.8" ry="2.4" fill="#fff"/><path d="M1366.6 124.2 H1372.6 V134 H1374 V135.8 H1366 V134 H1367.6 V126 H1366.6 Z" fill="#fff"/></svg>
<svg class="a" style="left:1404.7px;top:117.8px" width="20.0" height="20.000000000000014" viewBox="1404.7 117.8 20.0 20.000000000000014"><circle cx="1414.7" cy="127.8" r="7.9" fill="none" stroke="#c4c4c4" stroke-width="1.2"/><path d="M1411.5 124.6 L1417.5 130.6 M1417.7 126.6 V130.8 H1413.5" fill="none" stroke="#c4c4c4" stroke-width="1.3"/></svg>
<svg class="a" style="left:22px;top:20px" width="24" height="25" viewBox="22 20 24 25"><circle cx="33.9" cy="32.6" r="8.9" fill="#fff" stroke="#1e90ee" stroke-width="2.1"/><text x="33.6" y="35.1" font-family="Liberation Sans" font-weight="bold" font-size="7.4" fill="#1e90ee" stroke="#1e90ee" stroke-width="0.3" text-anchor="middle" letter-spacing="-0.5">USU</text><path d="M28 37 Q31 35.8 34 37 Q37 38.2 40 37" stroke="#9ccaf6" stroke-width="0.8" fill="none"/></svg>
<div class="a" style="left:1358px;top:35px;width:9px;height:2px;background:#7a7a7a;"></div>
<div class="a" style="left:1385px;top:29px;width:12px;height:9px;box-sizing:border-box;border:1.3px solid #7a7a7a;border-top-width:2px;"></div>
<svg class="a" style="left:1412px;top:27px" width="16" height="13" viewBox="1412 27 16 13"><path d="M1414.6 29.2 L1424.8 37.6 M1424.8 29.2 L1414.6 37.6" stroke="#7a7a7a" stroke-width="1.6"/></svg>
<div class="a" style="left:29px;top:69px;width:1px;height:19px;background:#c4c4c4;"></div>
<div class="a" style="left:31px;top:69px;width:1px;height:19px;background:#c4c4c4;"></div>
<svg class="a" style="left:37px;top:70px" width="16" height="18" viewBox="37 70 16 18"><rect x="37.5" y="70.5" width="15" height="16.5" rx="1.2" fill="url(#gBookCover)" stroke="#4f74b3" stroke-width="1"/><path d="M38.7 70.5 H41.5 V87 H38.7 Q37.5 87 37.5 85.8 V71.7 Q37.5 70.5 38.7 70.5Z" fill="url(#gBookSpine)"/><rect x="41" y="71.3" width="11" height="1.3" fill="#f0eef4"/></svg>
<div class="a" style="left:1304px;top:81px;width:9px;height:3px;background:#8a8a8a;"></div>
<svg class="a" style="left:1333px;top:72px" width="17" height="15" viewBox="1333 72 17 15"><path d="M1339.5 77 V74.3 H1347.3 V80.2 H1344" fill="none" stroke="#8a8a8a" stroke-width="1.3"/><path d="M1339.4 74.6 H1347.3" stroke="#8a8a8a" stroke-width="2"/><rect x="1336" y="78" width="7.6" height="6.3" fill="#fff" stroke="#8a8a8a" stroke-width="1.3"/><path d="M1336 78.3 H1343.6" stroke="#8a8a8a" stroke-width="2"/></svg>
<svg class="a" style="left:1371px;top:73px" width="16" height="13" viewBox="1371 73 16 13"><path d="M1373.6 75.4 L1383.6 83.4 M1383.6 75.4 L1373.6 83.4" stroke="#8a8a8a" stroke-width="1.6"/></svg>
<svg class="a" style="left:1405px;top:69.4px" width="20" height="20.0" viewBox="1405 69.4 20 20.0"><circle cx="1415" cy="79.4" r="7.8" fill="none" stroke="#c8c8c8" stroke-width="1.2"/><path d="M1411.8 76.2 L1417.8 82.2 M1418 78.2 V82.4 H1413.8" fill="none" stroke="#c8c8c8" stroke-width="1.3"/></svg>
<svg class="a" style="left:27px;top:171px" width="21" height="18" viewBox="27 171 21 18"><path d="M28.6 176 V174.6 Q28.6 173.4 29.8 173.4 H35.6 L37.4 175.2 H46.2 V176 Z" fill="#808080"/><rect x="28.6" y="175.6" width="17.6" height="11.6" fill="#f9bd55"/></svg>
<svg class="a" style="left:278px;top:173px" width="17" height="15" viewBox="278 173 17 15"><path d="M284.6 178.5 V175.7 H292 V181.6 H289" fill="none" stroke="#7a7a7a" stroke-width="1.2"/><path d="M284.6 176 H292" stroke="#7a7a7a" stroke-width="2"/><rect x="280.6" y="179.4" width="7.8" height="6" fill="#fff" stroke="#7a7a7a" stroke-width="1.2"/><path d="M280.6 179.8 H288.4" stroke="#7a7a7a" stroke-width="2"/></svg>
<svg class="a" style="left:317.2px;top:174.6px" width="12.0" height="14.0" viewBox="317.2 174.6 12.0 14.0"><rect x="320.59999999999997" y="175.79999999999998" width="5.2" height="6.4" fill="#d8d8d8" stroke="#7a7a7a" stroke-width="1"/><path d="M319.0 182.6 H327.4" stroke="#7a7a7a" stroke-width="1.6"/><path d="M323.2 182.6 V186.4" stroke="#7a7a7a" stroke-width="1"/></svg>
<svg class="a" style="left:310px;top:800px" width="22" height="22" viewBox="310 800 22 22"><circle cx="318.6" cy="808.4" r="5.2" fill="none" stroke="#2464cc" stroke-width="2.1"/><path d="M322.6 812.4 L327.6 817.2" stroke="#1c58d0" stroke-width="2.8" stroke-linecap="round"/></svg>
<svg class="a" style="left:28px;top:841px" width="22" height="22" viewBox="28 841 22 22"><path d="M30 861 Q30 855.4 38.8 854.4 Q47.6 855.4 47.6 861 Z" fill="#84bc38" stroke="#5a8a28" stroke-width="0.8"/><ellipse cx="38.8" cy="849.6" rx="5" ry="6" fill="#c07840"/><ellipse cx="38.8" cy="850.6" rx="3" ry="4.2" fill="#f4d0a0"/></svg>
<svg class="a" style="left:279px;top:847px" width="17" height="13" viewBox="279 847 17 13"><rect x="281.6" y="849.6" width="10.6" height="7.6" fill="#fff" stroke="#7a7a7a" stroke-width="1.2"/><path d="M281.6 850 H292.2" stroke="#7a7a7a" stroke-width="2"/></svg>
<svg class="a" style="left:317.4px;top:845.4px" width="12.0" height="14.0" viewBox="317.4 845.4 12.0 14.0"><rect x="320.79999999999995" y="846.6" width="5.2" height="6.4" fill="#d8d8d8" stroke="#7a7a7a" stroke-width="1"/><path d="M319.2 853.4 H327.59999999999997" stroke="#7a7a7a" stroke-width="1.6"/><path d="M323.4 853.4 V857.1999999999999" stroke="#7a7a7a" stroke-width="1"/></svg>
<div class="a" style="left:354px;top:176px;width:1px;height:20px;background:#c4c4c4;"></div>
<div class="a" style="left:356px;top:176px;width:1px;height:20px;background:#c4c4c4;"></div>
<svg class="a" style="left:366px;top:164px" width="36" height="42" viewBox="366 164 36 42"><rect x="369.6" y="166.8" width="28.8" height="36.4" fill="url(#gReport)" stroke="#a8b4d8" stroke-width="1.6"/><rect x="374" y="170.2" width="19.8" height="6.4" fill="#a8d4f0" stroke="#7eaee2" stroke-width="0.9"/><path d="M374 179.4 H393.8" stroke="#9cb4dc" stroke-width="0.9"/><path d="M374 181.8 H382 M374 184.4 H382 M374 186.8 H381.6 M374 189.4 H381.6 M374 191.8 H381.6 M374 194.4 H381.6 M374 196.8 H381.6 M374 199.4 H381.6" stroke="#b4c4e4" stroke-width="0.9"/><rect x="383.2" y="186.4" width="5.2" height="13.4" rx="0.8" fill="#6cb0e4" stroke="#4e90d0" stroke-width="0.7"/><rect x="388.4" y="181" width="5.4" height="18.8" rx="0.8" fill="#f4b884" stroke="#de9458" stroke-width="0.7"/></svg>
<svg class="a" style="left:455px;top:180px" width="15" height="11" viewBox="455 180 15 11"><path d="M460.4 183.4 H466.6 L463.5 187.2 Z" fill="#303030"/></svg>
<svg class="a" style="left:477px;top:166px" width="41" height="40" viewBox="477 166 41 40"><circle cx="497.4" cy="185.9" r="17.2" fill="url(#gGo)" stroke="#80b048" stroke-width="1"/><path d="M489.6 182.9 H496.8 V176.6 L507.8 185.8 L496.8 195 V189.2 H489.6 Z" fill="#f4f8ee" stroke="#a8cc80" stroke-width="0.7"/></svg>
<svg class="a" style="left:578px;top:180px" width="14" height="11" viewBox="578 180 14 11"><path d="M583 183.6 H589.2 L586.1 187.4 Z" fill="#303030"/></svg>
<div class="a" style="left:601px;top:164px;width:1px;height:44px;background:#bdbdbd;"></div>
<svg class="a" style="left:607px;top:165px" width="42" height="41" viewBox="607 165 42 41"><circle cx="628" cy="185.6" r="17.4" fill="url(#gClockRim)" stroke="#c05050" stroke-width="0.8"/><circle cx="628" cy="185.6" r="13.2" fill="url(#gClockFace)" stroke="#d88888" stroke-width="0.8"/><g fill="#8090a0"><circle cx="628" cy="174.6" r="0.7"/><circle cx="628" cy="196.6" r="0.7"/><circle cx="617" cy="185.6" r="0.7"/><circle cx="639" cy="185.6" r="0.7"/><circle cx="633.5" cy="176.1" r="0.6"/><circle cx="622.5" cy="176.1" r="0.6"/><circle cx="637.5" cy="191.1" r="0.6"/><circle cx="618.5" cy="191.1" r="0.6"/></g><path d="M628 185.6 L637 176.8 M628 185.6 V197" stroke="#606a78" stroke-width="1.2"/><path d="M628 185.6 H616.4" stroke="#e04040" stroke-width="1.2"/><circle cx="628" cy="185.6" r="1.2" fill="#506070"/></svg>
<svg class="a" style="left:1405px;top:176.2px" width="20" height="20.0" viewBox="1405 176.2 20 20.0"><circle cx="1415" cy="186.2" r="7.9" fill="none" stroke="#c8c8c8" stroke-width="1.2"/><path d="M1411.8 183.0 L1417.8 189.0 M1418 185.0 V189.2 H1413.8" fill="none" stroke="#c8c8c8" stroke-width="1.3"/></svg>
<svg class="a" style="left:27px;top:935px" width="24" height="24" viewBox="27 935 24 24"><circle cx="38.75" cy="947.1" r="9.9" fill="#4a84c4"/><rect x="37.1" y="942" width="2.8" height="2.4" fill="#fff"/><rect x="37.1" y="946" width="2.8" height="6.4" fill="#fff"/></svg>
<svg class="a" style="left:242px;top:935px" width="19" height="23" viewBox="242 935 19 23"><rect x="244.2" y="937.2" width="14.4" height="18.4" rx="3" fill="url(#gKey)" stroke="#c87a30" stroke-width="0.9"/><path d="M245 943.6 Q251.4 945.4 257.8 943.6 M245 949 Q251.4 950.8 257.8 949" stroke="#c86a28" stroke-width="0.9" fill="none"/><rect x="246.4" y="938.6" width="3.2" height="15.4" fill="#fffbe8" opacity="0.7"/></svg>
<svg class="a" style="left:410px;top:935px" width="23" height="23" viewBox="410 935 23 23"><path d="M412.6 955.8 Q412.6 950 421.3 949.2 Q430 950 430 955.8 Z" fill="#84bc38" stroke="#5a8a28" stroke-width="0.8"/><ellipse cx="421.1" cy="944.2" rx="5" ry="6.2" fill="#c07840"/><ellipse cx="421.1" cy="945.4" rx="3" ry="4.4" fill="#f4d0a0"/></svg>
<svg class="a" style="left:589px;top:936px" width="22" height="22" viewBox="589 936 22 22"><rect x="591.6" y="938.4" width="16.8" height="17" fill="#f8f8ff" stroke="#6a80c8" stroke-width="1"/><rect x="591.6" y="938.4" width="16.8" height="5.2" fill="#e06050"/><text x="600" y="954" font-family="Liberation Sans" font-weight="bold" font-size="10" fill="#2a3040" text-anchor="middle">31</text></svg>
<svg class="a" style="left:1416px;top:941px" width="16" height="16" viewBox="1416 941 16 16"><rect x="1428" y="943" width="2" height="2" fill="#7a7a7a"/><rect x="1423" y="948" width="2" height="2" fill="#7a7a7a"/><rect x="1428" y="948" width="2" height="2" fill="#7a7a7a"/><rect x="1418" y="953" width="2" height="2" fill="#7a7a7a"/><rect x="1423" y="953" width="2" height="2" fill="#7a7a7a"/><rect x="1428" y="953" width="2" height="2" fill="#7a7a7a"/></svg>
<div class="a" style="left:879px;top:613px;width:19px;height:1px;background:repeating-linear-gradient(to right,#909090 0 1px,transparent 1px 2px);"></div>
<svg class="a" style="left:527.4px;top:272.1px" width="22.0" height="22.0" viewBox="527.4 272.1 22.0 22.0"><circle cx="538.4" cy="283.1" r="8.9" fill="none" stroke="#cdcdcd" stroke-width="1.4"/><path d="M533.4 279.5 Q538.4 277.70000000000005 543.4 279.5 L539.1999999999999 284.3 V288.3 H537.6 V284.3 Z" fill="#b4b4b4"/><ellipse cx="538.4" cy="279.70000000000005" rx="3.6" ry="0.9" fill="#e8e8e8"/></svg>
<svg class="a" style="left:676px;top:272.1px" width="22" height="22.0" viewBox="676 272.1 22 22.0"><circle cx="687" cy="283.1" r="8.9" fill="none" stroke="#cdcdcd" stroke-width="1.4"/><path d="M682 279.5 Q687 277.70000000000005 692 279.5 L687.8 284.3 V288.3 H686.2 V284.3 Z" fill="#b4b4b4"/><ellipse cx="687" cy="279.70000000000005" rx="3.6" ry="0.9" fill="#e8e8e8"/></svg>
<svg class="a" style="left:828px;top:272.1px" width="22" height="22.0" viewBox="828 272.1 22 22.0"><circle cx="839" cy="283.1" r="8.9" fill="none" stroke="#cdcdcd" stroke-width="1.4"/><path d="M834 279.5 Q839 277.70000000000005 844 279.5 L839.8 284.3 V288.3 H838.2 V284.3 Z" fill="#b4b4b4"/><ellipse cx="839" cy="279.70000000000005" rx="3.6" ry="0.9" fill="#e8e8e8"/></svg>
<svg class="a" style="left:965px;top:272.1px" width="22" height="22.0" viewBox="965 272.1 22 22.0"><circle cx="976" cy="283.1" r="8.9" fill="none" stroke="#cdcdcd" stroke-width="1.4"/><path d="M971 279.5 Q976 277.70000000000005 981 279.5 L976.8 284.3 V288.3 H975.2 V284.3 Z" fill="#b4b4b4"/><ellipse cx="976" cy="279.70000000000005" rx="3.6" ry="0.9" fill="#e8e8e8"/></svg>
<svg class="a" style="left:1070px;top:272.1px" width="22" height="22.0" viewBox="1070 272.1 22 22.0"><circle cx="1081" cy="283.1" r="8.9" fill="none" stroke="#cdcdcd" stroke-width="1.4"/><path d="M1076 279.5 Q1081 277.70000000000005 1086 279.5 L1081.8 284.3 V288.3 H1080.2 V284.3 Z" fill="#b4b4b4"/><ellipse cx="1081" cy="279.70000000000005" rx="3.6" ry="0.9" fill="#e8e8e8"/></svg>
<svg class="a" style="left:1231px;top:272.1px" width="22" height="22.0" viewBox="1231 272.1 22 22.0"><circle cx="1242" cy="283.1" r="8.9" fill="none" stroke="#cdcdcd" stroke-width="1.4"/><path d="M1237 279.5 Q1242 277.70000000000005 1247 279.5 L1242.8 284.3 V288.3 H1241.2 V284.3 Z" fill="#b4b4b4"/><ellipse cx="1242" cy="279.70000000000005" rx="3.6" ry="0.9" fill="#e8e8e8"/></svg>
<svg class="a" style="left:1356.4px;top:272.1px" width="22.0" height="22.0" viewBox="1356.4 272.1 22.0 22.0"><circle cx="1367.4" cy="283.1" r="8.9" fill="none" stroke="#cdcdcd" stroke-width="1.4"/><path d="M1362.4 279.5 Q1367.4 277.70000000000005 1372.4 279.5 L1368.2 284.3 V288.3 H1366.6000000000001 V284.3 Z" fill="#b4b4b4"/><ellipse cx="1367.4" cy="279.70000000000005" rx="3.6" ry="0.9" fill="#e8e8e8"/></svg>
<svg class="a" style="left:481px;top:720.6px" width="22" height="22.0" viewBox="481 720.6 22 22.0"><circle cx="492" cy="731.6" r="8.9" fill="none" stroke="#cdcdcd" stroke-width="1.4"/><path d="M487 728.0 Q492 726.2 497 728.0 L492.8 732.8000000000001 V736.8000000000001 H491.2 V732.8000000000001 Z" fill="#b4b4b4"/><ellipse cx="492" cy="728.2" rx="3.6" ry="0.9" fill="#e8e8e8"/></svg>
<svg class="a" style="left:693.4px;top:720.6px" width="22.0" height="22.0" viewBox="693.4 720.6 22.0 22.0"><circle cx="704.4" cy="731.6" r="8.9" fill="none" stroke="#cdcdcd" stroke-width="1.4"/><path d="M699.4 728.0 Q704.4 726.2 709.4 728.0 L705.1999999999999 732.8000000000001 V736.8000000000001 H703.6 V732.8000000000001 Z" fill="#b4b4b4"/><ellipse cx="704.4" cy="728.2" rx="3.6" ry="0.9" fill="#e8e8e8"/></svg>
<svg class="a" style="left:905.8px;top:720.6px" width="22.0" height="22.0" viewBox="905.8 720.6 22.0 22.0"><circle cx="916.8" cy="731.6" r="8.9" fill="none" stroke="#cdcdcd" stroke-width="1.4"/><path d="M911.8 728.0 Q916.8 726.2 921.8 728.0 L917.5999999999999 732.8000000000001 V736.8000000000001 H916.0 V732.8000000000001 Z" fill="#b4b4b4"/><ellipse cx="916.8" cy="728.2" rx="3.6" ry="0.9" fill="#e8e8e8"/></svg>
<svg class="a" style="left:1156.3px;top:720.6px" width="22.0" height="22.0" viewBox="1156.3 720.6 22.0 22.0"><circle cx="1167.3" cy="731.6" r="8.9" fill="none" stroke="#cdcdcd" stroke-width="1.4"/><path d="M1162.3 728.0 Q1167.3 726.2 1172.3 728.0 L1168.1 732.8000000000001 V736.8000000000001 H1166.5 V732.8000000000001 Z" fill="#b4b4b4"/><ellipse cx="1167.3" cy="728.2" rx="3.6" ry="0.9" fill="#e8e8e8"/></svg>
<svg class="a" style="left:351px;top:319.5px" width="10" height="14.0" viewBox="351 319.5 10 14.0"><path d="M353 321.9 L357.6 326.5 L353 331.1 Z" fill="#404040"/></svg>
<svg class="a" style="left:352.5px;top:768px" width="10.0" height="14" viewBox="352.5 768 10.0 14"><path d="M354.5 770.4 L359.1 775 L354.5 779.6 Z" fill="#404040"/></svg>
<svg class="a" style="left:361.5px;top:631px" width="18.0" height="21" viewBox="361.5 631 18.0 21"><rect x="363.0" y="632.5" width="14.4" height="17" rx="1.2" fill="url(#gBookCover)" stroke="#4f70b0" stroke-width="1"/><path d="M364.2 632.5 H366.3 V649.5 H364.2 Q363.0 649.5 363.0 648.3 V633.7 Q363.0 632.5 364.2 632.5Z" fill="url(#gBookSpine)"/><rect x="366.0" y="633.6" width="11" height="1.4" fill="#eef0f6"/></svg>
<svg class="a" style="left:453.4px;top:632px" width="18.0" height="21" viewBox="453.4 632 18.0 21"><rect x="454.9" y="633.5" width="14.4" height="17" rx="1.2" fill="url(#gBookCover)" stroke="#4f70b0" stroke-width="1"/><path d="M456.09999999999997 633.5 H458.2 V650.5 H456.09999999999997 Q454.9 650.5 454.9 649.3 V634.7 Q454.9 633.5 456.09999999999997 633.5Z" fill="url(#gBookSpine)"/><rect x="457.9" y="634.6" width="11" height="1.4" fill="#eef0f6"/></svg>
<svg class="a" style="left:635.3px;top:632px" width="18.0" height="21" viewBox="635.3 632 18.0 21"><rect x="636.8" y="633.5" width="14.4" height="17" rx="1.2" fill="url(#gBookCover)" stroke="#4f70b0" stroke-width="1"/><path d="M638.0 633.5 H640.0999999999999 V650.5 H638.0 Q636.8 650.5 636.8 649.3 V634.7 Q636.8 633.5 638.0 633.5Z" fill="url(#gBookSpine)"/><rect x="639.8" y="634.6" width="11" height="1.4" fill="#eef0f6"/></svg>
<svg class="a" style="left:715.4px;top:632px" width="18.0" height="21" viewBox="715.4 632 18.0 21"><rect x="716.9" y="633.5" width="14.4" height="17" rx="1.2" fill="url(#gBookCover)" stroke="#4f70b0" stroke-width="1"/><path d="M718.1 633.5 H720.1999999999999 V650.5 H718.1 Q716.9 650.5 716.9 649.3 V634.7 Q716.9 633.5 718.1 633.5Z" fill="url(#gBookSpine)"/><rect x="719.9" y="634.6" width="11" height="1.4" fill="#eef0f6"/></svg>
<svg class="a" style="left:813.9px;top:632px" width="18.0" height="21" viewBox="813.9 632 18.0 21"><rect x="815.4" y="633.5" width="14.4" height="17" rx="1.2" fill="url(#gBookCover)" stroke="#4f70b0" stroke-width="1"/><path d="M816.6 633.5 H818.6999999999999 V650.5 H816.6 Q815.4 650.5 815.4 649.3 V634.7 Q815.4 633.5 816.6 633.5Z" fill="url(#gBookSpine)"/><rect x="818.4" y="634.6" width="11" height="1.4" fill="#eef0f6"/></svg>
<svg class="a" style="left:917.8px;top:632px" width="18.0" height="21" viewBox="917.8 632 18.0 21"><rect x="919.3" y="633.5" width="14.4" height="17" rx="1.2" fill="url(#gBookCover)" stroke="#4f70b0" stroke-width="1"/><path d="M920.5 633.5 H922.5999999999999 V650.5 H920.5 Q919.3 650.5 919.3 649.3 V634.7 Q919.3 633.5 920.5 633.5Z" fill="url(#gBookSpine)"/><rect x="922.3" y="634.6" width="11" height="1.4" fill="#eef0f6"/></svg>
<svg class="a" style="left:1128.4px;top:632px" width="18.0" height="21" viewBox="1128.4 632 18.0 21"><rect x="1129.9" y="633.5" width="14.4" height="17" rx="1.2" fill="url(#gBookCover)" stroke="#4f70b0" stroke-width="1"/><path d="M1131.1000000000001 633.5 H1133.2 V650.5 H1131.1000000000001 Q1129.9 650.5 1129.9 649.3 V634.7 Q1129.9 633.5 1131.1000000000001 633.5Z" fill="url(#gBookSpine)"/><rect x="1132.9" y="634.6" width="11" height="1.4" fill="#eef0f6"/></svg>
<svg class="a" style="left:1238px;top:632px" width="18" height="21" viewBox="1238 632 18 21"><rect x="1239.5" y="633.5" width="14.4" height="17" rx="1.2" fill="url(#gBookCover)" stroke="#4f70b0" stroke-width="1"/><path d="M1240.7 633.5 H1242.8 V650.5 H1240.7 Q1239.5 650.5 1239.5 649.3 V634.7 Q1239.5 633.5 1240.7 633.5Z" fill="url(#gBookSpine)"/><rect x="1242.5" y="634.6" width="11" height="1.4" fill="#eef0f6"/></svg>
<svg class="a" style="left:1346.7px;top:632px" width="18.0" height="21" viewBox="1346.7 632 18.0 21"><rect x="1348.2" y="633.5" width="14.4" height="17" rx="1.2" fill="url(#gBookCover)" stroke="#4f70b0" stroke-width="1"/><path d="M1349.4 633.5 H1351.5 V650.5 H1349.4 Q1348.2 650.5 1348.2 649.3 V634.7 Q1348.2 633.5 1349.4 633.5Z" fill="url(#gBookSpine)"/><rect x="1351.2" y="634.6" width="11" height="1.4" fill="#eef0f6"/></svg>
<svg class="a" style="left:39.8px;top:888.5px" width="30" height="34" viewBox="0 0 30 34"><rect x="0.5" y="0.5" width="29" height="33" rx="2.5" fill="url(#gBookCover)" stroke="#4f74b3"/><path d="M2.5 0.5 H6 V33.5 H2.5 A2 2 0 0 1 0.5 31.5 V2.5 A2 2 0 0 1 2.5 0.5Z" fill="url(#gBookSpine)"/><rect x="3" y="1.4" width="26" height="2.2" fill="#f3f0f5"/><rect x="5.5" y="3.6" width="23.5" height="1.4" fill="#93b6d8"/></svg>
<div class="a" style="left:151.3px;top:896.2px;width:18.4px;height:18.4px;background:#fff;"></div>
<svg class="a" style="left:153px;top:899px" width="15" height="14" viewBox="153 899 15 14"><path d="M155.8 901.6 L165.2 909.6 M165.2 901.6 L155.8 909.6" stroke="#1e9be6" stroke-width="2.2" stroke-linecap="round"/></svg>
<svg class="a" style="left:204.3px;top:888.5px" width="30" height="34" viewBox="0 0 30 34"><rect x="0.5" y="0.5" width="29" height="33" rx="2.5" fill="url(#gBookCover)" stroke="#4f74b3"/><path d="M2.5 0.5 H6 V33.5 H2.5 A2 2 0 0 1 0.5 31.5 V2.5 A2 2 0 0 1 2.5 0.5Z" fill="url(#gBookSpine)"/><rect x="3" y="1.4" width="26" height="2.2" fill="#f3f0f5"/><rect x="5.5" y="3.6" width="23.5" height="1.4" fill="#93b6d8"/></svg>
<div class="a" style="left:333.90000000000003px;top:896.2px;width:18.4px;height:18.4px;background:#fff;"></div>
<svg class="a" style="left:335.6px;top:899px" width="15.0" height="14" viewBox="335.6 899 15.0 14"><path d="M338.40000000000003 901.6 L347.8 909.6 M347.8 901.6 L338.40000000000003 909.6" stroke="#1e9be6" stroke-width="2.2" stroke-linecap="round"/></svg>
<svg class="a" style="left:386.4px;top:888.5px" width="30" height="34" viewBox="0 0 30 34"><rect x="0.5" y="0.5" width="29" height="33" rx="2.5" fill="url(#gBookCover)" stroke="#4f74b3"/><path d="M2.5 0.5 H6 V33.5 H2.5 A2 2 0 0 1 0.5 31.5 V2.5 A2 2 0 0 1 2.5 0.5Z" fill="url(#gBookSpine)"/><rect x="3" y="1.4" width="26" height="2.2" fill="#f3f0f5"/><rect x="5.5" y="3.6" width="23.5" height="1.4" fill="#93b6d8"/></svg>
<div class="a" style="left:485.2px;top:896.2px;width:18.4px;height:18.4px;background:#fff;"></div>
<svg class="a" style="left:486.9px;top:899px" width="15.0" height="14" viewBox="486.9 899 15.0 14"><path d="M489.7 901.6 L499.09999999999997 909.6 M499.09999999999997 901.6 L489.7 909.6" stroke="#1e9be6" stroke-width="2.2" stroke-linecap="round"/></svg>
<svg class="a" style="left:537.5px;top:890px" width="30" height="34" viewBox="0 0 30 34"><rect x="0.5" y="0.5" width="29" height="33" rx="2.5" fill="url(#gBookCover)" stroke="#4f74b3"/><path d="M2.5 0.5 H6 V33.5 H2.5 A2 2 0 0 1 0.5 31.5 V2.5 A2 2 0 0 1 2.5 0.5Z" fill="url(#gBookSpine)"/><rect x="3" y="1.4" width="26" height="2.2" fill="#f3f0f5"/><rect x="5.5" y="3.6" width="23.5" height="1.4" fill="#93b6d8"/></svg>
<svg class="a" style="left:660.9px;top:900px" width="15.0" height="14" viewBox="660.9 900 15.0 14"><path d="M663.6999999999999 902.6 L673.1 910.6 M673.1 902.6 L663.6999999999999 910.6" stroke="#1e9be6" stroke-width="2.2" stroke-linecap="round"/></svg>
</body></html>
